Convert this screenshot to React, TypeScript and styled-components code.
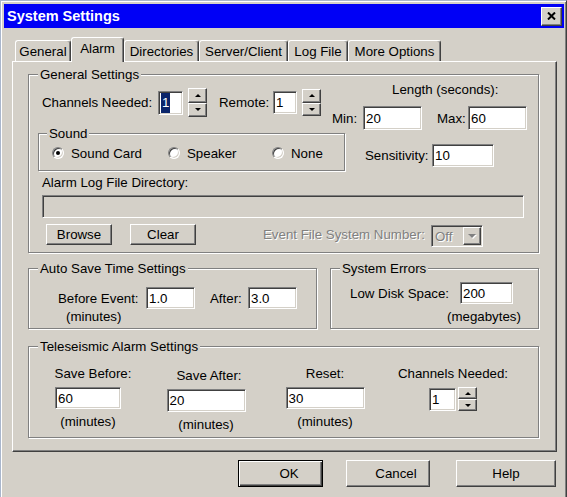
import React from 'react';
import styled, { createGlobalStyle, css } from 'styled-components';

// -------------------------
// Palette
// -------------------------

const FACE = '#d4d0c8';
const SHADOW = '#808080';
const DARK = '#404040';

const GlobalStyle = createGlobalStyle`
	html, body {
		margin: 0;
		padding: 0;
		background: ${FACE};
	}
	body {
		font-family: "Liberation Sans", Arial, sans-serif;
		font-size: 13.3px;
		color: #000;
	}
	* {
		box-sizing: border-box;
	}
`;

const raised = css`
	background: ${FACE};
	border: 1px solid;
	border-color: #fff ${DARK} ${DARK} #fff;
	box-shadow: inset -1px -1px 0 ${SHADOW};
`;

const sunken = css`
	border: 1px solid;
	border-color: ${SHADOW} #fff #fff ${SHADOW};
	box-shadow: inset 1px 1px 0 ${DARK}, inset -1px -1px 0 ${FACE};
`;

// -------------------------
// Window frame
// -------------------------

const Window = styled.div`
	width: 567px;
	height: 497px;
	overflow: hidden;
	background: ${FACE};
	border-top: 1px solid #a9b6cc;
	border-left: 1px solid #a9b6cc;
	border-right: 1px solid ${DARK};
	box-shadow: inset 1px 1px 0 #fff, inset -1px 0 0 ${SHADOW};
	padding: 3px 2px 0 3px;
	display: flex;
	flex-direction: column;
`;

const TitleBar = styled.div`
	height: 24px;
	flex: none;
	background: #0000f6;
	display: flex;
	align-items: center;
	padding: 0 2px 0 3px;
`;

const TitleText = styled.div`
	flex: 1;
	color: #fff;
	font-weight: bold;
	font-size: 14.5px;
	line-height: 16px;
`;

const CloseButton = styled.div`
	${raised};
	width: 21px;
	height: 19px;
	display: flex;
	align-items: center;
	justify-content: center;
`;

const Body = styled.div`
	display: flex;
	flex-direction: column;
	padding-left: 8px;
`;

// -------------------------
// Tabs
// -------------------------

const TabRow = styled.div`
	display: flex;
	align-items: flex-end;
	height: 25px;
	margin-top: 9px;
	margin-bottom: -1px;
	padding-left: 3px;
	position: relative;
	z-index: 1;
`;

const Tab = styled.div<{ $w: number; $active?: boolean }>`
	width: ${p => p.$w}px;
	height: ${p => (p.$active ? 25 : 21)}px;
	margin-bottom: ${p => (p.$active ? 0 : 1)}px;
	padding-bottom: ${p => (p.$active ? 3 : 0)}px;
	flex: none;
	background: ${FACE};
	border-top: 1px solid #fff;
	border-left: 1px solid #fff;
	border-right: 1px solid ${DARK};
	border-radius: 3px 3px 0 0;
	box-shadow: inset -1px 0 0 ${SHADOW};
	display: flex;
	align-items: center;
	justify-content: center;
	white-space: nowrap;
`;

const Panel = styled.div`
	width: 545px;
	height: 391px;
	flex: none;
	border-top: 1px solid #fff;
	border-left: 1px solid #fff;
	border-right: 1px solid ${DARK};
	border-bottom: 1px solid ${DARK};
	box-shadow: inset -1px -1px 0 ${SHADOW};
	padding: 12px 0 0 15px;
	display: flex;
	flex-direction: column;
`;

// -------------------------
// Group boxes
// -------------------------

const Group = styled.div<{ $w: number; $h: number }>`
	width: ${p => p.$w}px;
	height: ${p => p.$h}px;
	flex: none;
	border: 1px solid ${SHADOW};
	box-shadow: inset 1px 1px 0 #fff, 1px 1px 0 #fff;
	display: flex;
	flex-direction: column;
`;

const GroupTitle = styled.div<{ $ml?: number }>`
	align-self: flex-start;
	margin: -8px 0 0 ${p => p.$ml ?? 9}px;
	padding: 0 2px;
	line-height: 15px;
	background: ${FACE};
	white-space: nowrap;
`;

const GroupBody = styled.div<{ $pl?: number }>`
	display: flex;
	flex-direction: column;
	padding-left: ${p => p.$pl ?? 0}px;
`;

const GroupRow = styled.div<{ $mt: number }>`
	display: flex;
	gap: 13px;
	margin-top: ${p => p.$mt}px;
`;

// -------------------------
// Controls
// -------------------------

const Label = styled.span<{ $w?: number; $ml?: number; $disabled?: boolean }>`
	flex: none;
	width: ${p => (p.$w ? `${p.$w}px` : 'auto')};
	margin-left: ${p => p.$ml ?? 0}px;
	line-height: 15px;
	white-space: nowrap;
	color: ${p => (p.$disabled ? SHADOW : '#000')};
	text-shadow: ${p => (p.$disabled ? '1px 1px 0 #fff' : 'none')};
`;

const Caption = styled.div<{ $mt?: number; $ml?: number }>`
	line-height: 15px;
	white-space: nowrap;
	margin: ${p => p.$mt ?? 0}px 0 0 ${p => p.$ml ?? 0}px;
`;

const TextBox = styled.div<{ $w: number; $h: number; $disabled?: boolean; $ml?: number }>`
	${sunken};
	width: ${p => p.$w}px;
	height: ${p => p.$h}px;
	margin-left: ${p => p.$ml ?? 0}px;
	flex: none;
	background: ${p => (p.$disabled ? FACE : '#fff')};
	padding: 0 2px;
	display: flex;
	align-items: center;
	line-height: 15px;
	white-space: nowrap;
	overflow: hidden;
`;

const Selection = styled.span`
	align-self: stretch;
	margin: 1px 0;
	padding: 0 1px;
	display: flex;
	align-items: center;
	background: #0a246a;
	color: #fff;
`;

const Spinner = styled.div<{ $h: number; $ml?: number }>`
	width: 19px;
	height: ${p => p.$h}px;
	margin-left: ${p => p.$ml ?? 0}px;
	flex: none;
	display: flex;
	flex-direction: column;
`;

const SpinButton = styled.div`
	${raised};
	flex: 1;
	display: flex;
	align-items: center;
	justify-content: center;
`;

const SpinArrow = styled.span<{ $down?: boolean }>`
	width: 0;
	height: 0;
	border-left: 3px solid transparent;
	border-right: 3px solid transparent;
	${p =>
		p.$down
			? css`border-top: 3px solid #000;`
			: css`border-bottom: 3px solid #000;`}
`;

const Button = styled.div<{
	$w: number;
	$h: number;
	$ml?: number;
	$shift?: number;
	$default?: boolean;
}>`
	${raised};
	width: ${p => p.$w}px;
	height: ${p => p.$h}px;
	margin-left: ${p => p.$ml ?? 0}px;
	padding-left: ${p => p.$shift ?? 0}px;
	flex: none;
	display: flex;
	align-items: center;
	justify-content: center;
	line-height: 15px;
	${p =>
		p.$default &&
		css`
			border: 1px solid #000;
			box-shadow: inset 1px 1px 0 #fff, inset -1px -1px 0 ${DARK},
				inset -2px -2px 0 ${SHADOW};
		`}
`;

const Select = styled.div<{ $w: number; $h: number; $mt?: number }>`
	${sunken};
	width: ${p => p.$w}px;
	height: ${p => p.$h}px;
	margin-top: ${p => p.$mt ?? 0}px;
	flex: none;
	background: ${FACE};
	padding: 1px;
	display: flex;
	align-items: stretch;
`;

const SelectText = styled.span`
	flex: 1;
	padding-left: 2px;
	display: flex;
	align-items: center;
	color: ${SHADOW};
	text-shadow: 1px 1px 0 #fff;
`;

const DropButton = styled.div`
	${raised};
	width: 18px;
	display: flex;
	align-items: center;
	justify-content: center;
`;

const DropArrow = styled.span`
	width: 0;
	height: 0;
	border-left: 4px solid transparent;
	border-right: 4px solid transparent;
	border-top: 4px solid ${SHADOW};
	filter: drop-shadow(1px 1px 0 #fff);
`;

const RadioRow = styled.div`
	display: flex;
	align-items: center;
	height: 14px;
	margin-top: 5px;
	padding-left: 13px;
`;

const RadioItem = styled.div<{ $w?: number }>`
	width: ${p => (p.$w ? `${p.$w}px` : 'auto')};
	flex: none;
	display: flex;
	align-items: center;
	gap: 7px;
	line-height: 15px;
	white-space: nowrap;
`;

const RadioDot = styled.span<{ $checked?: boolean }>`
	${sunken};
	width: 12px;
	height: 12px;
	flex: none;
	border-radius: 50%;
	background: #fff;
	display: flex;
	align-items: center;
	justify-content: center;
	&::after {
		content: '';
		width: 4px;
		height: 4px;
		border-radius: 50%;
		background: #000;
		display: ${p => (p.$checked ? 'block' : 'none')};
	}
`;

// -------------------------
// Layout pieces
// -------------------------

const TopRow = styled.div<{ $mt?: number }>`
	display: flex;
	align-items: flex-start;
	margin-top: ${p => p.$mt ?? 0}px;
`;

const FieldRow = styled.div<{ $mt?: number; $ml?: number }>`
	display: flex;
	align-items: center;
	margin: ${p => p.$mt ?? 0}px 0 0 ${p => p.$ml ?? 0}px;
`;

const ChannelsBlock = styled(FieldRow)`
	width: 294px;
	flex: none;
	padding-left: 4px;
`;

const LengthBlock = styled.div`
	display: flex;
	flex-direction: column;
`;

const TeleColumn = styled.div<{ $w: number; $mt: number }>`
	width: ${p => p.$w}px;
	flex: none;
	margin-top: ${p => p.$mt}px;
	display: flex;
	flex-direction: column;
	align-items: center;
`;

const Footer = styled.div`
	display: flex;
	margin-top: 8px;
	padding-left: 226px;
`;

// -------------------------
// Small composites
// -------------------------

const Spin = ({ h, ml }: { h: number; ml?: number }) => (
	<Spinner $h={h} $ml={ml}>
		<SpinButton>
			<SpinArrow />
		</SpinButton>
		<SpinButton>
			<SpinArrow $down />
		</SpinButton>
	</Spinner>
);

const Radio = ({ label, checked, w }: { label: string; checked?: boolean; w?: number }) => (
	<RadioItem $w={w}>
		<RadioDot $checked={checked} />
		{label}
	</RadioItem>
);

const tabs = [
	{ name: 'General', w: 56 },
	{ name: 'Alarm', w: 53, active: true },
	{ name: 'Directories', w: 75 },
	{ name: 'Server/Client', w: 89 },
	{ name: 'Log File', w: 60 },
	{ name: 'More Options', w: 93 },
];

// -------------------------
// Page
// -------------------------

export default function App() {
	return (
		<>
			<GlobalStyle />
			<Window>
				<TitleBar>
					<TitleText>System Settings</TitleText>
					<CloseButton>
						<svg width="9" height="8" viewBox="0 0 9 8">
							<path d="M1 0.5 L8 7.5 M8 0.5 L1 7.5" stroke="#000" strokeWidth="2" />
						</svg>
					</CloseButton>
				</TitleBar>
				<Body>
					<TabRow>
						{tabs.map(t => (
							<Tab key={t.name} $w={t.w} $active={t.active}>
								{t.name}
							</Tab>
						))}
					</TabRow>
					<Panel>
						<Group $w={511} $h={179}>
							<GroupTitle>General Settings</GroupTitle>
							<GroupBody $pl={9}>
								<TopRow>
									<ChannelsBlock $mt={6}>
										<Label $w={116}>Channels Needed:</Label>
										<TextBox $w={25} $h={24}>
											<Selection>1</Selection>
										</TextBox>
										<Spin h={29} ml={5} />
										<Label $w={54} $ml={12}>
											Remote:
										</Label>
										<TextBox $w={24} $h={23}>
											1
										</TextBox>
										<Spin h={27} ml={5} />
									</ChannelsBlock>
									<LengthBlock>
										<Label $ml={60}>Length (seconds):</Label>
										<FieldRow $mt={9}>
											<Label $w={31}>Min:</Label>
											<TextBox $w={59} $h={24}>
												20
											</TextBox>
											<Label $w={31} $ml={15}>
												Max:
											</Label>
											<TextBox $w={59} $h={24}>
												60
											</TextBox>
										</FieldRow>
									</LengthBlock>
								</TopRow>
								<TopRow $mt={3}>
									<Group $w={307} $h={38}>
										<GroupTitle $ml={8}>Sound</GroupTitle>
										<RadioRow>
											<Radio label="Sound Card" checked w={116} />
											<Radio label="Speaker" w={104} />
											<Radio label="None" />
										</RadioRow>
									</Group>
									<FieldRow $mt={11} $ml={20}>
										<Label $w={67}>Sensitivity:</Label>
										<TextBox $w={62} $h={23}>
											10
										</TextBox>
									</FieldRow>
								</TopRow>
								<Caption $mt={4} $ml={4}>
									Alarm Log File Directory:
								</Caption>
								<FieldRow $mt={5}>
									<TextBox $w={482} $h={23} $ml={4} $disabled />
								</FieldRow>
								<TopRow $mt={6}>
									<Button $w={66} $h={21} $ml={8}>
										Browse
									</Button>
									<Button $w={66} $h={21} $ml={18}>
										Clear
									</Button>
									<FieldRow $mt={3}>
										<Label $w={168} $ml={67} $disabled>
											Event File System Number:
										</Label>
									</FieldRow>
									<Select $w={52} $h={22} $mt={1}>
										<SelectText>Off</SelectText>
										<DropButton>
											<DropArrow />
										</DropButton>
									</Select>
								</TopRow>
							</GroupBody>
						</Group>

						<GroupRow $mt={15}>
							<Group $w={289} $h={61}>
								<GroupTitle>Auto Save Time Settings</GroupTitle>
								<GroupBody $pl={29}>
									<FieldRow $mt={11}>
										<Label $w={88}>Before Event:</Label>
										<TextBox $w={49} $h={22}>
											1.0
										</TextBox>
										<Label $w={38} $ml={15}>
											After:
										</Label>
										<TextBox $w={49} $h={22}>
											3.0
										</TextBox>
									</FieldRow>
									<Caption $ml={8}>(minutes)</Caption>
								</GroupBody>
							</Group>
							<Group $w={209} $h={61}>
								<GroupTitle>System Errors</GroupTitle>
								<GroupBody $pl={19}>
									<FieldRow $mt={6}>
										<Label $w={110}>Low Disk Space:</Label>
										<TextBox $w={53} $h={22}>
											200
										</TextBox>
									</FieldRow>
									<Caption $mt={5} $ml={97}>
										(megabytes)
									</Caption>
								</GroupBody>
							</Group>
						</GroupRow>

						<GroupRow $mt={17}>
							<Group $w={511} $h={92}>
								<GroupTitle>Teleseismic Alarm Settings</GroupTitle>
								<TopRow>
									<TeleColumn $w={118} $mt={12}>
										<Label $ml={10}>Save Before:</Label>
										<FieldRow $mt={6}>
											<TextBox $w={66} $h={22}>
												60
											</TextBox>
										</FieldRow>
										<Caption $mt={5}>(minutes)</Caption>
									</TeleColumn>
									<TeleColumn $w={118} $mt={14}>
										<Label $ml={6}>Save After:</Label>
										<FieldRow $mt={6}>
											<TextBox $w={79} $h={23}>
												20
											</TextBox>
										</FieldRow>
										<Caption $mt={5}>(minutes)</Caption>
									</TeleColumn>
									<TeleColumn $w={120} $mt={12}>
										<Label>Reset:</Label>
										<FieldRow $mt={6}>
											<TextBox $w={79} $h={22}>
												30
											</TextBox>
										</FieldRow>
										<Caption $mt={5}>(minutes)</Caption>
									</TeleColumn>
									<TeleColumn $w={136} $mt={12}>
										<Label>Channels Needed:</Label>
										<FieldRow $mt={6}>
											<TextBox $w={27} $h={23}>
												1
											</TextBox>
											<Spin h={24} ml={2} />
										</FieldRow>
									</TeleColumn>
								</TopRow>
							</Group>
						</GroupRow>
					</Panel>
					<Footer>
						<Button $w={85} $h={27} $shift={17} $default>
							OK
						</Button>
						<Button $w={84} $h={27} $ml={23} $shift={16}>
							Cancel
						</Button>
						<Button $w={100} $h={27} $ml={26}>
							Help
						</Button>
					</Footer>
				</Body>
			</Window>
		</>
	);
}
